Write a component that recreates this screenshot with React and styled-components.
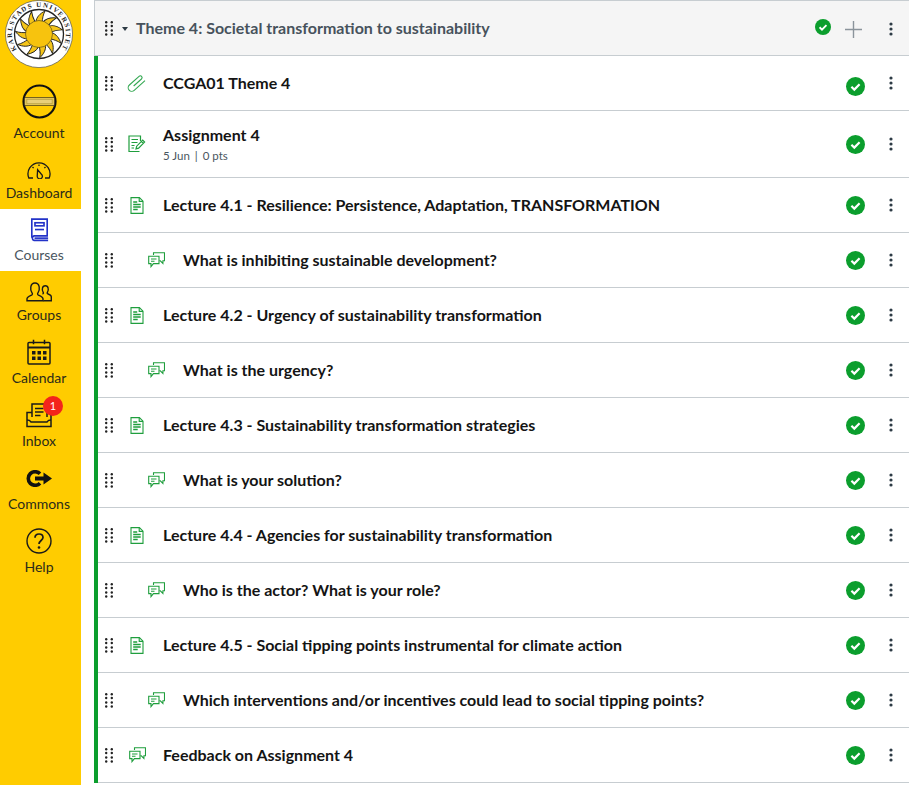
import React from 'react';
import styled, { createGlobalStyle } from 'styled-components';

const GlobalStyle = createGlobalStyle`
  html, body {
    margin: 0;
    padding: 0;
    background: #fff;
    font-family: Lato, "Liberation Sans", sans-serif;
    overflow: hidden;
  }
`;

const Page = styled.div`
  display: flex;
  width: 909px;
  height: 785px;
  overflow: hidden;
`;

const Sidebar = styled.nav`
  flex: none;
  width: 81px;
  background: #ffcc00;
  display: flex;
  flex-direction: column;
  align-items: stretch;
`;

const LogoWrap = styled.div`
  height: 75px;
  display: flex;
  justify-content: center;
  margin-right: 3px;
`;

const NavItem = styled.div`
  height: ${p => p.$h || 63}px;
  padding-top: ${p => p.$top || 3}px;
  box-sizing: border-box;
  display: flex;
  flex-direction: column;
  align-items: center;
  padding-right: 3px;
  background: ${p => (p.$active ? '#fff' : 'transparent')};
  color: ${p => (p.$active ? '#4a5660' : '#2b2b1a')};
`;

const NavIcon = styled.div`
  position: relative;
  height: 30px;
  display: flex;
  align-items: center;
  justify-content: center;
`;

const NavLabel = styled.span`
  font-size: 14px;
  line-height: 17px;
  margin-top: ${p => p.$gap ?? 2}px;
`;

const Badge = styled.span`
  position: absolute;
  top: -4px;
  right: -11px;
  width: 20px;
  height: 20px;
  border-radius: 50%;
  background: #f3241b;
  color: #fff;
  font-size: 11px;
  line-height: 20px;
  text-align: center;
`;

const Main = styled.main`
  flex: none;
  width: 815px;
  margin-left: 13px;
`;

const ModuleHeader = styled.header`
  height: 56px;
  box-sizing: border-box;
  display: flex;
  align-items: center;
  background: #f5f5f5;
  border: 1px solid #c7cdd1;
  border-right: none;
  padding-left: 10px;
`;

const Caret = styled.span`
  width: 0;
  height: 0;
  margin: 2px 8px 0 9px;
  border-left: 3.5px solid transparent;
  border-right: 3.5px solid transparent;
  border-top: 4px solid #2d3b45;
`;

const ModuleTitle = styled.h2`
  flex: 1;
  margin: 0 0 2px;
  font-size: 16px;
  font-weight: 700;
  color: #47525c;
  white-space: nowrap;
`;

const HeaderActions = styled.div`
  display: flex;
  align-items: center;
  padding-right: 16px;
  margin-top: 2px;
`;

const HeaderCheck = styled.span`
  display: flex;
  margin-bottom: 4px;
`;

const PlusButton = styled.span`
  display: flex;
  margin: 0 27px 0 14px;
  color: #8b949b;
`;

const List = styled.ul`
  list-style: none;
  margin: 0;
  padding: 0;
  border-left: 4px solid #0b9e2d;
`;

const Row = styled.li`
  height: ${p => (p.$tall ? 67 : 55)}px;
  box-sizing: border-box;
  display: flex;
  align-items: center;
  border-bottom: 1px solid #c7cdd1;
  padding-left: 7px;
  padding-right: 16px;
`;

const RowIcon = styled.span`
  display: flex;
  justify-content: center;
  width: 20px;
  margin-left: ${p => (p.$indent ? 33 : 14)}px;
  margin-right: ${p => (p.$indent ? 17 : 16)}px;
`;

const RowBody = styled.div`
  flex: 1;
  min-width: 0;
`;

const RowTitle = styled.div`
  font-size: 16px;
  line-height: 20px;
  font-weight: 700;
  color: #141414;
  white-space: nowrap;
`;

const RowMeta = styled.div`
  font-size: 11.5px;
  line-height: 14px;
  margin: 4px 0 1px;
  color: #4a5660;
`;

const MetaSep = styled.span`
  margin: 0 5px;
`;

const RowActions = styled.div`
  display: flex;
  align-items: center;
  gap: 23px;
`;

const CheckWrap = styled.span`
  display: flex;
  margin-top: ${p => p.$drop || 0}px;
`;

const KebabWrap = styled.span`
  display: flex;
  width: 5px;
  justify-content: center;
`;

const Handle = () => (
  <svg width="8" height="15" viewBox="0 0 8 15" fill="#222">
    {[1.2, 5, 9.5, 13.5].flatMap(y => [1.2, 6.8].map(x => <circle key={`${x}-${y}`} cx={x} cy={y} r="1.2" />))}
  </svg>
);

const Kebab = () => (
  <svg width="4" height="14" viewBox="0 0 4 14" fill="#2d3b45">
    <circle cx="2" cy="2" r="1.6" />
    <circle cx="2" cy="7" r="1.6" />
    <circle cx="2" cy="12" r="1.6" />
  </svg>
);

const Check = ({ size = 19 }) => (
  <svg width={size} height={size} viewBox="0 0 19 19">
    <circle cx="9.5" cy="9.5" r="9.5" fill="#0b9e2d" />
    <path d="M5.4 9.8l2.9 2.8 5.3-5.3" fill="none" stroke="#fff" strokeWidth="2.2" />
  </svg>
);

const Clip = () => (
  <svg width="20" height="20" viewBox="0 0 20 20" fill="none" stroke="#35a853" strokeWidth="1.1">
    <g transform="translate(10 10) rotate(-42) translate(-11.5 -4.6)">
      <path d="M7 4.600H17.500A1.800 1.800 0 0 0 17.500 1H4.500A3.600 3.600 0 0 0 4.500 8.200H19" />
    </g>
  </svg>
);

const AssignmentIcon = () => (
  <svg width="18" height="18" viewBox="0 0 18 18" fill="none" stroke="#1f9e3d" strokeWidth="1.2">
    <path d="M12.500 6V1H1v15.500h10.500" />
    <path d="M3.500 4.500h6.500M3.500 7.500h6M3.500 10.500h3M3.500 13h2.500" />
    <path d="M8 13.800l.7-2.600 6-6 1.900 1.900-6 6zM13.400 6.400l1.900 1.900" />
  </svg>
);

const PageIcon = () => (
  <svg width="14" height="17" viewBox="0 0 14 17" fill="none" stroke="#1f9e3d" strokeWidth="1.1">
    <path d="M1 .6h8.400L13 4.200v12.200H1z" />
    <path d="M9.200 .8v3.600H13" />
    <path d="M3.200 5h4M3.200 7.500h7.500M3.200 10h7.500M3.200 12.500h4.500" strokeWidth="1.300" />
  </svg>
);

const DiscussionIcon = () => (
  <svg width="17" height="16" viewBox="0 0 17 16" fill="none" stroke="#1f9e3d" strokeWidth="1.1">
    <path d="M5.500 3V.8h11v8h-1.600v2.600l-2.600-2.600h-1" />
    <path d="M.7 4.200h10.300v7.400H5.400L3 14.600v-3H.7z" />
    <path d="M3 7h5.500M3 9.300h3.500" />
  </svg>
);

const Logo = () => (
  <svg width="68" height="68" viewBox="0 0 68 68">
    <defs>
      <path id="ring" d="M11.900 49.500A27 27 0 1 1 56.100 49.500" />
    </defs>
    <circle cx="34" cy="34" r="33.600" fill="#fff" stroke="#555" strokeWidth="0.7" />
    <circle cx="34" cy="34" r="24.500" fill="#fff" stroke="#222" strokeWidth="1.300" />
    <text fontFamily="'Liberation Serif', serif" fontSize="6.800" fontWeight="700" fill="#222">
      <textPath href="#ring" textLength="116">KARLSTADS UNIVERSITET</textPath>
    </text>
    {Array.from({ length: 11 }).map((_, i) => (
      <path
        key={i}
        transform={`rotate(${(i * 360) / 11} 34 34)`}
        d="M30.800 22C31.500 17 35 13.500 40 11C38 15 37.500 18.500 37.200 22Z"
        fill="#f5c518"
        stroke="#222"
        strokeWidth="0.9"
      />
    ))}
    <circle cx="34" cy="34" r="13.500" fill="#f7c30e" stroke="#222" strokeWidth="0.5" />
  </svg>
);

const AccountIcon = () => (
  <svg width="35" height="35" viewBox="0 0 36 36">
    <circle cx="18" cy="18" r="16.500" fill="#ffcc00" stroke="#111" strokeWidth="2.200" />
    <rect x="2.500" y="14" width="31" height="8" fill="#e3c65a" stroke="#1a1a1a" strokeWidth="0.6" />
    <rect x="5" y="15.700" width="26" height="4.600" fill="#e9d07a" stroke="#b09a3a" strokeWidth="0.7" />
  </svg>
);

const DashboardIcon = () => (
  <svg width="26" height="18" viewBox="0 0 26 18" fill="none" stroke="#1a1a1a" strokeWidth="1.300">
    <path d="M7 17H2.800A11 11 0 1 1 23.200 17H19" />
    <path d="M13 8.500l2.200 5.500a2.600 2.600 0 1 1-4.600.6z" transform="rotate(-18 13 13)" />
    <path d="M13 3.500v1.500M6.500 6l1.100 1.100M19.500 6l-1.100 1.100" />
  </svg>
);

const CoursesIcon = () => (
  <svg width="19" height="24" viewBox="0 0 21 26" fill="none" stroke="#2232c8" strokeWidth="1.800">
    <path d="M2 21.500V1h17v18.500H4.500a2.600 2.600 0 0 0 0 5H20" />
    <rect x="5.500" y="5" width="10" height="3.400" />
    <path d="M5.500 12.500h10" />
    <path d="M5 22h15" />
  </svg>
);

const GroupsIcon = () => (
  <svg width="27" height="20" viewBox="0 0 27 20" fill="none" stroke="#1a1a1a" strokeWidth="1.400">
    <path d="M1 18.800v-2c0-2 3-3 5-4 .7-.5.4-1.600-.2-2.400C4.800 9 4.500 7 4.800 5c.4-2.500 2-4 4.200-4s3.800 1.500 4.200 4c.3 2 0 4-1 5.400-.6.800-.9 1.900-.2 2.400 2 1 5 2 5 4v2z" />
    <path d="M16.500 12c1.300-.4 1-1.200.6-1.900-.7-1-1-2.300-.7-3.700.3-1.600 1.400-2.600 2.900-2.600s2.600 1 2.900 2.600c.3 1.400 0 2.700-.7 3.700-.4.700-.7 1.500.6 1.900 1.500.5 3.200 1.200 3.200 2.800V18.800h-8" />
  </svg>
);

const CalendarIcon = () => (
  <svg width="24" height="26" viewBox="0 0 24 26" fill="none" stroke="#1a1a1a" strokeWidth="1.500">
    <rect x="1" y="3.500" width="22" height="21.500" rx="1" />
    <path d="M1 8.500h22" strokeWidth="2" />
    <path d="M6.500 .8v4.500M17.500 .8v4.500" />
    <g fill="#1a1a1a" stroke="none">
      {[5, 10.500, 16].flatMap(x => [12, 17.500].map(y => <rect key={`${x}-${y}`} x={x} y={y} width="3.500" height="3.500" />))}
    </g>
  </svg>
);

const InboxIcon = () => (
  <svg width="26" height="25" viewBox="0 0 26 25" fill="none" stroke="#1a1a1a" strokeWidth="1.500">
    <path d="M6 14V1h13.500l1.500 2v11" />
    <path d="M9 5.500h8.500M9 9h8.500M9 12.500h5.500" />
    <path d="M6 9.500H1v14h24v-14h-4" />
    <path d="M1 17c3 0 3 .5 4 2h16c1-1.500 1-2 4-2" />
  </svg>
);

const CommonsIcon = () => (
  <svg width="26" height="17" viewBox="0 0 26 17" fill="#111">
    <path d="M14 3.800A6.800 6.800 0 1 0 14 13.200" fill="none" stroke="#111" strokeWidth="3.600" />
    <path d="M9 6.500h8.500V2.500l8.500 6-8.500 6v-4H9z" />
  </svg>
);

const HelpIcon = () => (
  <svg width="26" height="26" viewBox="0 0 26 26" fill="none" stroke="#1a1a1a" strokeWidth="1.400">
    <circle cx="13" cy="13" r="12" />
    <path d="M9 9.800c0-2.500 1.900-3.800 4-3.800s4 1.300 4 3.500c0 3-4 3-4 6.500" strokeWidth="1.700" />
    <circle cx="13" cy="19.500" r="1.300" fill="#1a1a1a" stroke="none" />
  </svg>
);

const navItems = [
  { label: 'Account', icon: <AccountIcon />, h: 71, top: 11, gap: 8 },
  { label: 'Dashboard', icon: <DashboardIcon />, top: 9, gap: -1 },
  { label: 'Courses', icon: <CoursesIcon />, h: 62, top: 6, gap: 1, active: true },
  { label: 'Groups', icon: <GroupsIcon />, top: 6, gap: -1 },
  { label: 'Calendar', icon: <CalendarIcon /> },
  { label: 'Inbox', icon: <InboxIcon />, badge: 1 },
  { label: 'Commons', icon: <CommonsIcon /> },
  { label: 'Help', icon: <HelpIcon /> },
];

const rowIcons = {
  clip: <Clip />,
  assignment: <AssignmentIcon />,
  page: <PageIcon />,
  discussion: <DiscussionIcon />,
};

const rows = [
  { title: 'CCGA01 Theme 4', icon: 'clip', drop: 6 },
  { title: 'Assignment 4', icon: 'assignment', meta: ['5 Jun', '0 pts'], tall: true },
  { title: 'Lecture 4.1 - Resilience: Persistence, Adaptation, TRANSFORMATION', icon: 'page' },
  { title: 'What is inhibiting sustainable development?', icon: 'discussion', indent: true },
  { title: 'Lecture 4.2 - Urgency of sustainability transformation', icon: 'page' },
  { title: 'What is the urgency?', icon: 'discussion', indent: true },
  { title: 'Lecture 4.3 - Sustainability transformation strategies', icon: 'page' },
  { title: 'What is your solution?', icon: 'discussion', indent: true },
  { title: 'Lecture 4.4 - Agencies for sustainability transformation', icon: 'page' },
  { title: 'Who is the actor? What is your role?', icon: 'discussion', indent: true },
  { title: 'Lecture 4.5 - Social tipping points instrumental for climate action', icon: 'page' },
  { title: 'Which interventions and/or incentives could lead to social tipping points?', icon: 'discussion', indent: true },
  { title: 'Feedback on Assignment 4', icon: 'discussion' },
];

export default function App() {
  return (
    <Page>
      <GlobalStyle />
      <Sidebar>
        <LogoWrap><Logo /></LogoWrap>
        {navItems.map(item => (
          <NavItem key={item.label} $h={item.h} $top={item.top} $active={item.active}>
            <NavIcon>
              {item.icon}
              {item.badge && <Badge>{item.badge}</Badge>}
            </NavIcon>
            <NavLabel $gap={item.gap}>{item.label}</NavLabel>
          </NavItem>
        ))}
      </Sidebar>
      <Main>
        <ModuleHeader>
          <Handle />
          <Caret />
          <ModuleTitle>Theme 4: Societal transformation to sustainability</ModuleTitle>
          <HeaderActions>
            <HeaderCheck><Check size={16} /></HeaderCheck>
            <PlusButton>
              <svg width="17" height="17" viewBox="0 0 17 17" stroke="currentColor" strokeWidth="1.400">
                <path d="M8.500 0v17M0 8.500h17" />
              </svg>
            </PlusButton>
            <Kebab />
          </HeaderActions>
        </ModuleHeader>
        <List>
          {rows.map(row => (
            <Row key={row.title} $tall={row.tall}>
              <Handle />
              <RowIcon $indent={row.indent}>{rowIcons[row.icon]}</RowIcon>
              <RowBody>
                <RowTitle>{row.title}</RowTitle>
                {row.meta && (
                  <RowMeta>
                    {row.meta[0]}<MetaSep>|</MetaSep>{row.meta[1]}
                  </RowMeta>
                )}
              </RowBody>
              <RowActions>
                <CheckWrap $drop={row.drop}><Check /></CheckWrap>
                <KebabWrap><Kebab /></KebabWrap>
              </RowActions>
            </Row>
          ))}
        </List>
      </Main>
    </Page>
  );
}
